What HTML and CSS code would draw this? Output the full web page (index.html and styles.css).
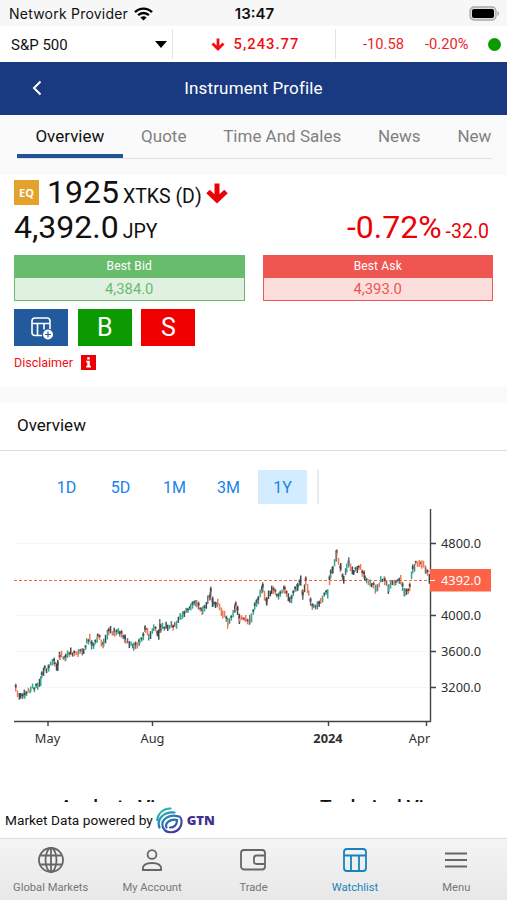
FILE: index.html
```html
<!DOCTYPE html>
<html lang="en">
<head>
  <meta charset="UTF-8">
  <title>Instrument Profile</title>
  <link rel="stylesheet" href="styles.css">
</head>
<body>
  <div class="status-bar">
    <div class="carrier">
      <span>Network Provider</span>
      <svg width="19" height="14" viewBox="0 0 19 14" fill="none" stroke="#000" stroke-width="2.4">
        <path d="M1 5.2C5.8 .4 13.2 .4 18 5.2"/>
        <path d="M4.1 8.2c3.1-3 7.7-3 10.8 0"/>
        <path d="M9.5 13.6L6.4 10.5c1.7-1.7 4.5-1.7 6.2 0z" fill="#000" stroke="none"/>
      </svg>
    </div>
    <div class="clock">13:47</div>
    <svg class="battery" width="31" height="15" viewBox="0 0 31 15">
      <rect x="1" y="1" width="26" height="13" rx="4" fill="#ddd" stroke="#aaa" stroke-width="1.3"/>
      <rect x="3" y="3" width="22" height="9" rx="2" fill="#000"/>
      <path d="M28.5 5v5c2-.8 2-4.2 0-5z" fill="#aaa"/>
    </svg>
  </div>

  <div class="ticker">
    <div class="index-select">
      <span>S&amp;P 500</span>
      <svg width="12" height="7" viewBox="0 0 12 7"><path d="M0 0h12L6 7z"/></svg>
    </div>
    <div class="index-value">
      <svg width="14" height="13" viewBox="0 0 14 13" fill="none" stroke="#f00f14" stroke-width="2.8"><path d="M7 .5v10.5M1.5 5.500L7 11l5.500-5.500"/></svg>
      <span>5,243.77</span>
    </div>
    <div class="index-change">
      <span>-10.58</span>
      <span>-0.20%</span>
      <i class="dot"></i>
    </div>
  </div>

  <header class="title-bar">
    <svg width="10" height="16" viewBox="0 0 10 16" fill="none" stroke="#fff" stroke-width="2"><path d="M8.5 1.5L2 8l6.5 6.5"/></svg>
    <h1>Instrument Profile</h1>
  </header>

  <nav class="tabs">
    <div class="tab-list">
      <a class="tab active">Overview</a>
      <a class="tab">Quote</a>
      <a class="tab">Time And Sales</a>
      <a class="tab">News</a>
      <a class="tab">News</a>
    </div>
  </nav>

  <section class="instrument">
    <div class="symbol-row">
      <span class="badge">EQ</span>
      <span class="symbol">1925</span>
      <span class="exchange">XTKS (D)</span>
      <svg width="22" height="21" viewBox="0 0 22 21" fill="none" stroke="#eb0006" stroke-width="5"><path d="M11 .5V17M2 8.500l9 8.500 9-8.500"/></svg>
    </div>
    <div class="price-row">
      <span class="price">4,392.0</span>
      <span class="currency">JPY</span>
      <span class="percent">-0.72%</span>
      <span class="change">-32.0</span>
    </div>
    <div class="quotes">
      <div class="quote bid">
        <div class="quote-label">Best Bid</div>
        <div class="quote-value">4,384.0</div>
      </div>
      <div class="quote ask">
        <div class="quote-label">Best Ask</div>
        <div class="quote-value">4,393.0</div>
      </div>
    </div>
    <div class="actions">
      <button class="action add">
        <svg width="24" height="24" viewBox="0 0 24 24" fill="none" stroke="#fff" stroke-width="1.6">
          <path d="M13 19.500H6a3 3 0 0 1-3-3V5a3 3 0 0 1 3-3h12a3 3 0 0 1 3 3v8M3 7.500h18M8.500 7.500v12M15 7.500v6"/>
          <circle cx="19" cy="18.500" r="5" fill="#fff" stroke="none"/>
          <path d="M19 15.500v6M16 18.500h6" stroke="#235a9d" stroke-width="1.2"/>
        </svg>
      </button>
      <button class="action buy">B</button>
      <button class="action sell">S</button>
    </div>
    <div class="disclaimer">
      <span>Disclaimer</span>
      <svg width="15" height="15" viewBox="0 0 15 15">
        <rect width="15" height="15" fill="#eb0006"/>
        <path d="M6.2 2.300h2.600v2.300H6.200zM5.200 5.700h3.600v5h1.100v1.700H5.200v-1.700h1.100V7.400H5.200z" fill="#fff"/>
      </svg>
    </div>
  </section>

  <section class="overview">
    <h2>Overview</h2>
    <div class="ranges">
      <span>1D</span>
      <span>5D</span>
      <span>1M</span>
      <span>3M</span>
      <span class="selected">1Y</span>
    </div>
    <svg class="chart" width="507" height="250" viewBox="0 505 507 250">
      <g class="grid">
        <path d="M15 543.5h415M15 615.5h415M15 651.5h415M15 687.5h415"/>
      </g>
      <path class="last-line" d="M14 580.5h417"/>
      <g id="candles"></g>
      <path class="axis" d="M430.5 509v212.5M14 721.5h417M430 543.5h6M430 615.5h6M430 651.5h6M430 687.5h6M48 721v5M152.5 721v5M328.5 721v5M426.5 721v5"/>
      <rect x="430" y="569" width="61" height="22.5" fill="#ff6347"/>
      <path d="M430 580.5h5" stroke="#fff"/>
      <g class="labels">
        <text x="441" y="548">4800.0</text>
        <text x="441" y="585" class="last">4392.0</text>
        <text x="441" y="620">4000.0</text>
        <text x="441" y="656">3600.0</text>
        <text x="441" y="692">3200.0</text>
        <text x="47.5" y="743" text-anchor="middle">May</text>
        <text x="152.5" y="743" text-anchor="middle">Aug</text>
        <text x="328" y="743" text-anchor="middle" class="year">2024</text>
        <text x="419.5" y="743" text-anchor="middle">Apr</text>
      </g>
    </svg>
    <div class="next-cards">
      <span>Analysts View</span>
      <span>Technical View</span>
    </div>
  </section>

  <div class="powered">
    <span>Market Data powered by</span>
    <svg width="27" height="27" viewBox="0 0 27 27" fill="none" stroke="url(#gtn)" stroke-width="2.2" stroke-linecap="round">
      <defs>
        <linearGradient id="gtn" x1="4" y1="2" x2="19" y2="26" gradientUnits="userSpaceOnUse">
          <stop offset="0" stop-color="#30c5ad"/>
          <stop offset=".5" stop-color="#2876b4"/>
          <stop offset="1" stop-color="#44339b"/>
        </linearGradient>
      </defs>
      <path d="M1.2 13C2 6 8 1.200 14.500 1.500"/>
      <path d="M3.5 20.500C0 12 8 4.500 18.500 5.500"/>
      <path d="M22.5 9.500C14 6.500 5 12 6.500 19c2 8.500 14.500 8 18 .5 1.700-3.500 1.500-8-1-10"/>
      <path d="M10.5 20.500c-2-4.500 4-9 10.500-7.500 0 5-3 7.500-7 7.500"/>
    </svg>
    <b>GTN</b>
  </div>

  <nav class="bottom-nav">
    <a>
      <svg width="28" height="28" viewBox="0 0 28 28"><circle cx="14" cy="14" r="12"/><ellipse cx="14" cy="14" rx="5.5" ry="12"/><path d="M14 2v24M3.5 9.500h21M3.500 18.500h21"/></svg>
      <span>Global Markets</span>
    </a>
    <a>
      <svg width="28" height="28" viewBox="0 0 28 28"><circle cx="14" cy="8.500" r="4.400"/><path d="M4.800 24v-1c0-4 4-6 9.200-6s9.200 2 9.200 6v1z"/></svg>
      <span>My Account</span>
    </a>
    <a>
      <svg width="28" height="28" viewBox="0 0 28 28"><rect x="2" y="4" width="24" height="19.5" rx="3"/><path d="M26 9.500h-8.500a2.500 2.500 0 0 0-2.500 2.500v3.500a2.500 2.500 0 0 0 2.500 2.500H26"/></svg>
      <span>Trade</span>
    </a>
    <a class="current">
      <svg width="28" height="28" viewBox="0 0 28 28"><rect x="3" y="3" width="22" height="22" rx="3"/><path d="M3 9.500h22M10 9.500V25M18 9.500V25"/></svg>
      <span>Watchlist</span>
    </a>
    <a>
      <svg width="28" height="28" viewBox="0 0 28 28"><path d="M3 7.500h22M3 14h22M3 20.500h22"/></svg>
      <span>Menu</span>
    </a>
  </nav>

  <script src="chart.js"></script>
</body>
</html>
```
FILE: styles.css
```css
* {
  box-sizing: border-box;
}
body {
  margin: 0;
  height: 900px;
  overflow: hidden;
  display: flex;
  flex-direction: column;
  font-family: Roboto, sans-serif;
  color: #111;
  background: #fff;
}
svg {
  display: block;
  flex: none;
}
.status-bar {
  height: 26px;
  flex: none;
  display: grid;
  grid-template-columns: 1fr auto 1fr;
  align-items: center;
  padding: 1px 7px 0 9px;
  background: #f7f7f7;
  font-family: Inter, sans-serif;
  font-size: 14px;
}
.carrier {
  display: flex;
  align-items: center;
  gap: 6px;
  letter-spacing: 0.22px;
}
.clock {
  font-size: 15px;
  font-weight: 600;
}
.battery {
  justify-self: end;
}
.ticker {
  height: 36px;
  flex: none;
  display: flex;
  align-items: center;
}
.index-select {
  width: 173px;
  height: 30px;
  display: flex;
  align-items: center;
  justify-content: space-between;
  padding: 1px 5px 0 11px;
  border-right: 1px solid #e4e4e4;
  font-size: 15px;
}
.index-value {
  width: 163px;
  height: 30px;
  display: flex;
  align-items: center;
  justify-content: center;
  gap: 9px;
  padding-left: 2px;
  border-right: 1px solid #e4e4e4;
  color: #f00f14;
  font-size: 14.8px;
  font-weight: 500;
  letter-spacing: 1px;
}
.index-change {
  flex: 1;
  display: flex;
  align-items: center;
  padding: 0 6px 0 27px;
  color: #e9252a;
  font-size: 14.7px;
}
.index-change span + span {
  margin-left: 21px;
}
.dot {
  width: 13px;
  height: 13px;
  margin-left: auto;
  border-radius: 50%;
  background: #0b9a00;
}
.title-bar {
  height: 53px;
  flex: none;
  display: grid;
  grid-template-columns: 60px 1fr 60px;
  align-items: center;
  padding-bottom: 1px;
  background: #193a80;
  color: #fff;
}
.title-bar svg {
  margin-left: 32px;
}
h1 {
  margin: 0;
  text-align: center;
  font-size: 17px;
  font-weight: 400;
  letter-spacing: 0.15px;
}
.tabs {
  height: 60px;
  flex: none;
  padding: 0 15px 0 17px;
  background: #fafafa;
}
.tab-list {
  display: flex;
  height: 44px;
  overflow: hidden;
  border-bottom: 1px solid #e0e0e0;
}
.tab {
  flex: none;
  padding: 11px 18.4px 0;
  font-size: 17px;
  color: #818181;
}
.active {
  color: #111;
  border-bottom: 4px solid #22549a;
}
.instrument {
  height: 211px;
  flex: none;
  padding: 0 14px;
}
.symbol-row {
  display: flex;
  align-items: baseline;
  height: 35px;
}
.symbol-row svg {
  margin: 2px 0 0 4px;
  align-self: center;
}
.badge {
  width: 25px;
  height: 25px;
  margin-right: 8px;
  align-self: center;
  background: #e4a12b;
  color: #fff;
  font: bold 11px/25px "Open Sans", sans-serif;
  text-align: center;
}
.symbol, .price, .percent {
  font-size: 32px;
  line-height: 34px;
}
.exchange, .currency, .change {
  margin-left: 4px;
  font-size: 19.5px;
}
.price-row {
  display: flex;
  align-items: baseline;
  height: 37px;
}
.percent {
  margin-left: auto;
}
.percent, .change {
  color: #eb0006;
}
.change {
  margin-right: 4px;
}
.quotes {
  display: grid;
  grid-template-columns: 1fr 1fr;
  gap: 18px;
  margin-top: 8px;
}
.quote {
  height: 46px;
  border: 1px solid;
  text-align: center;
}
.quote-label {
  height: 22px;
  line-height: 20px;
  color: #fff;
  font-size: 12px;
  letter-spacing: 0.15px;
}
.quote-value {
  height: 22px;
  line-height: 23px;
  font-size: 14.8px;
}
.bid {
  border-color: #68bd6d;
  background: #e0f1e1;
  color: #68bd6d;
}
.bid .quote-label {
  background: #68bd6d;
}
.ask {
  border-color: #ef5551;
  background: #fcdedd;
  color: #ef5551;
}
.ask .quote-label {
  background: #ef5551;
}
.actions {
  display: flex;
  gap: 9.7px;
  margin-top: 8px;
}
.action {
  width: 54px;
  height: 37px;
  padding: 0;
  border: 0;
  display: flex;
  align-items: center;
  justify-content: center;
  color: #fff;
  font: 25px Roboto, sans-serif;
}
.add {
  background: #235a9d;
}
.buy {
  background: #0b9a00;
}
.sell {
  background: #f10000;
}
.disclaimer {
  display: flex;
  align-items: center;
  gap: 8px;
  margin-top: 9px;
  color: #f00f14;
  font-size: 12.5px;
}
.overview {
  border-top: 16px solid #fafafa;
  height: 416px;
  flex: none;
  overflow: hidden;
}
h2 {
  height: 49px;
  margin: 0;
  padding-left: 17px;
  border-bottom: 1px solid #dedede;
  font-size: 17px;
  line-height: 46px;
  font-weight: 400;
}
.ranges {
  display: flex;
  gap: 5px;
  width: 277px;
  height: 34px;
  margin: 19px 0 0 42px;
  border-right: 2px solid #e8eaee;
}
.ranges span {
  width: 49px;
  line-height: 35px;
  text-align: center;
  color: #1683ec;
  font-size: 16px;
}
.ranges .selected {
  background: #d4ecff;
}
.chart {
  margin-top: 1px;
}
.grid path {
  stroke: #f4f5f6;
}
.last-line {
  stroke: #ff6347;
  stroke-dasharray: 3 2;
}
.axis {
  fill: none;
  stroke: #444;
  stroke-width: 1.4;
}
.labels {
  font: 12.8px "Noto Sans", sans-serif;
  fill: #303030;
}
.labels .last {
  fill: #fff;
}
.labels .year {
  font-weight: bold;
}
.next-cards {
  display: grid;
  grid-template-columns: 260px 1fr;
  height: 100px;
  padding: 40px 0 0 60px;
  font-size: 19px;
  font-weight: 500;
}
.powered {
  height: 36px;
  flex: none;
  display: flex;
  align-items: center;
  padding-left: 5px;
  font-size: 13.7px;
}
.powered svg {
  margin: 0 4px 0 3px;
}
.powered b {
  color: #40318f;
  font: 800 13px "Open Sans", sans-serif;
}
.bottom-nav {
  height: 62px;
  flex: none;
  display: grid;
  grid-template-columns: repeat(5, 1fr);
  border-top: 1px solid #dedede;
  background: linear-gradient(#f4f4f4, #e8e8e8);
}
.bottom-nav a {
  display: flex;
  flex-direction: column;
  align-items: center;
  gap: 7px;
  padding-top: 7px;
  color: #777;
  font-size: 11.2px;
}
.bottom-nav svg {
  fill: none;
  stroke: #666;
  stroke-width: 1.8;
  stroke-linejoin: round;
}
.bottom-nav .current {
  color: #1683be;
}
.bottom-nav .current svg {
  stroke: #1683be;
}
```
FILE: chart.js
```js
// x, y of the price path across the year
const path = [
  [15, 690], [20, 697], [24, 693], [30, 689], [37, 686], [40, 681], [41, 676], [44, 670],
  [48, 666], [54, 662], [57, 667], [59, 656], [65, 656], [70, 652], [78, 654], [83, 649],
  [86, 643], [89, 637], [91, 646], [97, 638], [103, 643], [108, 629], [114, 634], [119, 632],
  [125, 641], [133, 648], [139, 640], [145, 630], [148, 636], [153, 627], [158, 637], [160, 628],
  [167, 626], [174, 626], [180, 616], [190, 609], [196, 602], [202, 610], [207, 602], [210, 594],
  [213, 605], [217, 604], [222, 612], [227, 624], [235, 605], [239, 618], [245, 618], [249, 622],
  [254, 608], [262, 588], [266, 600], [271, 588], [276, 596], [284, 590], [289, 602], [297, 586],
  [300, 581], [302, 593], [305, 583], [308, 595], [313, 608], [320, 601], [327, 593], [330, 575],
  [332, 568], [336, 555], [340, 568], [343, 580], [346, 570], [348, 562], [353, 572], [358, 566],
  [364, 577], [371, 584], [375, 588], [380, 581], [384, 580], [388, 588], [395, 582], [400, 581],
  [404, 594], [409, 587], [412, 570], [415, 563], [421, 563], [425, 569], [429, 582]
];
const colors = ["#42484e", "#36a58e", "#f07858", "#42484e", "#66747a"];
const candles = document.getElementById("candles");

let seed = 7;
function random() {
  seed = (seed * 16807) % 2147483647;
  return seed / 2147483647;
}

function bar(x, top, height, width, color) {
  const rect = document.createElementNS("http://www.w3.org/2000/svg", "rect");
  rect.setAttribute("x", x);
  rect.setAttribute("y", top);
  rect.setAttribute("width", width);
  rect.setAttribute("height", height);
  rect.setAttribute("fill", color);
  candles.appendChild(rect);
}

for (let i = 1; i < path.length; i++) {
  const [x1, y1] = path[i - 1];
  const [x2, y2] = path[i];
  for (let x = x1; x < x2; x += 1.8) {
    const y = y1 + (y2 - y1) * (x - x1) / (x2 - x1) + random() * 5 - 2.5;
    const slope = Math.min(4, Math.abs((y2 - y1) / (x2 - x1)));
    const h = 3 + random() * 4 + slope;
    const color = random() < 0.5 ? colors[y2 < y1 ? 1 : 2] : colors[Math.floor(random() * 5)];
    bar(x, y - h / 2, h, 1.5, color);
    if (random() < 0.45) {
      bar(x - 0.2, y - h / 3, h / 3, 1.8, "#42484e");
    }
  }
}

// single spikes
bar(159.2, 619, 14, 1.2, "#555");
bar(335.5, 550, 12, 1.2, "#777");
bar(227, 620, 9, 1.2, "#f07858");
bar(209.5, 592, 8, 1.2, "#555");
```
